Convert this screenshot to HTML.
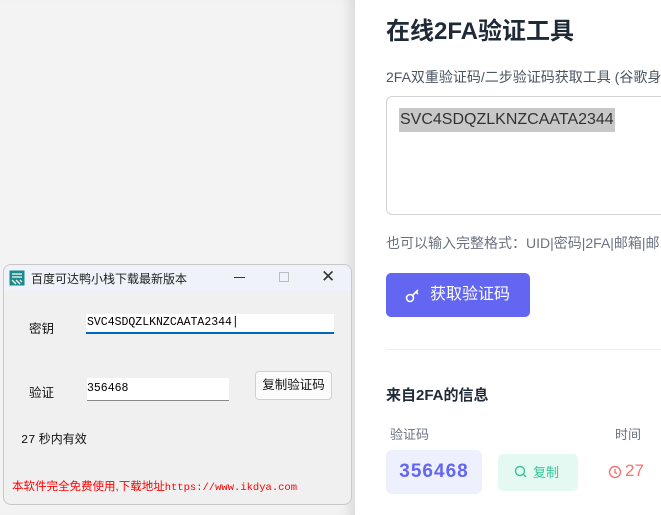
<!DOCTYPE html>
<html><head><meta charset="utf-8"><style>
*{margin:0;padding:0;box-sizing:border-box}
body{width:661px;height:515px;overflow:hidden;position:relative;background:#fff;font-family:"Liberation Sans","Noto Sans CJK SC",sans-serif}
.left{position:absolute;left:0;top:0;width:355px;height:515px;background:#f3f3f3;box-shadow:inset -14px 0 14px -10px rgba(0,0,0,.12)}
.a{position:absolute;white-space:nowrap}
.win{position:absolute;left:3px;top:264px;width:349px;height:241px;background:#f0f0f0;border:1px solid #c8c8c8;border-radius:8px;overflow:hidden}
.tb{position:absolute;left:0;top:0;width:100%;height:26px;background:#eff3f9}
.mono{font-family:"Liberation Mono","Noto Sans CJK SC",monospace}
</style></head><body>
<div class="left"></div>
<div class="a" style="left:386px;top:11px;font-size:24px;font-weight:bold;color:#1f2937">在线2FA验证工具</div>
<div class="a" style="left:386px;top:67px;font-size:14px;color:#4b5563">2FA双重验证码/二步验证码获取工具 (谷歌身</div>
<div class="a" style="left:386px;top:96px;width:300px;height:119px;border:1px solid #d4d4d8;border-radius:6px"></div>
<div class="a" style="left:399px;top:108px;height:24px;background:#c8c8c8;padding:0 1px;font-size:16px;line-height:24px;color:#333">SVC4SDQZLKNZCAATA2344</div>
<div class="a" style="left:386px;top:233px;font-size:14px;color:#6b7280">也可以输入完整格式：UID|密码|2FA|邮箱|邮</div>
<div class="a" style="left:386px;top:273px;width:144px;height:44px;background:#6366f1;border-radius:5px;color:#fff;font-size:16px;line-height:44px;padding-left:44px">获取验证码</div>
<svg class="a" style="left:404px;top:286px" width="18" height="18" viewBox="0 0 18 18"><circle cx="6" cy="12" r="3.5" fill="none" stroke="#fff" stroke-width="1.6"/><path d="M8.5 9.5 14 4M12 6l2 2" stroke="#fff" stroke-width="1.6" fill="none"/></svg>
<div class="a" style="left:386px;top:349px;width:275px;height:1px;background:#eceef1"></div>
<div class="a" style="left:386px;top:384px;font-size:15px;font-weight:bold;color:#1f2937">来自2FA的信息</div>
<div class="a" style="left:390px;top:424px;font-size:13px;color:#6b7280">验证码</div>
<div class="a" style="left:615px;top:424px;font-size:13px;color:#6b7280">时间</div>
<div class="a" style="left:386px;top:450px;width:96px;height:44px;background:#eef0fd;border-radius:6px;color:#6366f1;font-weight:bold;font-size:19px;line-height:44px;text-align:center;letter-spacing:1px">356468</div>
<div class="a" style="left:498px;top:454px;width:80px;height:37px;background:#e4f9f1;border-radius:5px;color:#34c39a;font-size:13px;line-height:37px;padding-left:35px">复制</div>
<svg class="a" style="left:514px;top:465px" width="14" height="14" viewBox="0 0 14 14"><circle cx="6" cy="6" r="4.5" fill="none" stroke="#34c39a" stroke-width="1.4"/><path d="M9.5 9.5 12 12" stroke="#34c39a" stroke-width="1.4"/></svg>
<svg class="a" style="left:608px;top:465px" width="14" height="14" viewBox="0 0 14 14"><circle cx="7" cy="7" r="5.5" fill="none" stroke="#f87171" stroke-width="1.4"/><path d="M7 4v3.3l2 1.5" stroke="#f87171" stroke-width="1.4" fill="none"/></svg>
<div class="a" style="left:625px;top:461px;font-size:17px;color:#f87171">27</div>

<div class="win">
<div class="tb"></div>
<svg class="a" style="left:5px;top:5px" width="16" height="16" viewBox="0 0 16 16"><rect x="0.5" y="0.5" width="15" height="15" fill="#1a8a8a"/><path d="M3 4h10M3 7h10M3 10l4 4M7 10l4 4M11 10l2 2" stroke="#fff" stroke-width="1.3" fill="none"/></svg>
<div class="a" style="left:27px;top:5px;font-size:12px;color:#222">百度可达鸭小栈下载最新版本</div>
<div class="a" style="left:230px;top:12px;width:11px;height:1px;background:#333"></div>
<div class="a" style="left:275px;top:7px;width:10px;height:10px;border:1px solid #bbb"></div>
<div class="a" style="left:317px;top:2px;font-size:17px;color:#333">✕</div>
<div class="a" style="left:25px;top:53px;font-size:12.5px;color:#111">密钥</div>
<div class="a mono" style="left:82px;top:49px;width:248px;height:20px;background:#fff;border-bottom:2px solid #0067c0;font-size:11.5px;line-height:18px;padding-left:1px;color:#000">SVC4SDQZLKNZCAATA2344|</div>
<div class="a" style="left:25px;top:117px;font-size:12.5px;color:#111">验证</div>
<div class="a mono" style="left:83px;top:113px;width:142px;height:23px;background:#fff;border-bottom:1px solid #888;font-size:11.5px;line-height:22px;color:#000">356468</div>
<div class="a" style="left:251px;top:106px;width:77px;height:29px;background:#fbfbfb;border:1px solid #d0d0d0;border-radius:4px;font-size:12.5px;line-height:27px;text-align:center;color:#111">复制验证码</div>
<div class="a" style="left:17px;top:165px;font-size:12px;color:#111"><span class="mono">27</span> 秒内有效</div>
<div class="a" style="left:8px;top:213px;font-size:11.5px;color:#f00">本软件完全免费使用,下载地址<span class="mono" style="font-size:10.5px">https://www.ikdya.com</span></div>
</div>
</body></html>
